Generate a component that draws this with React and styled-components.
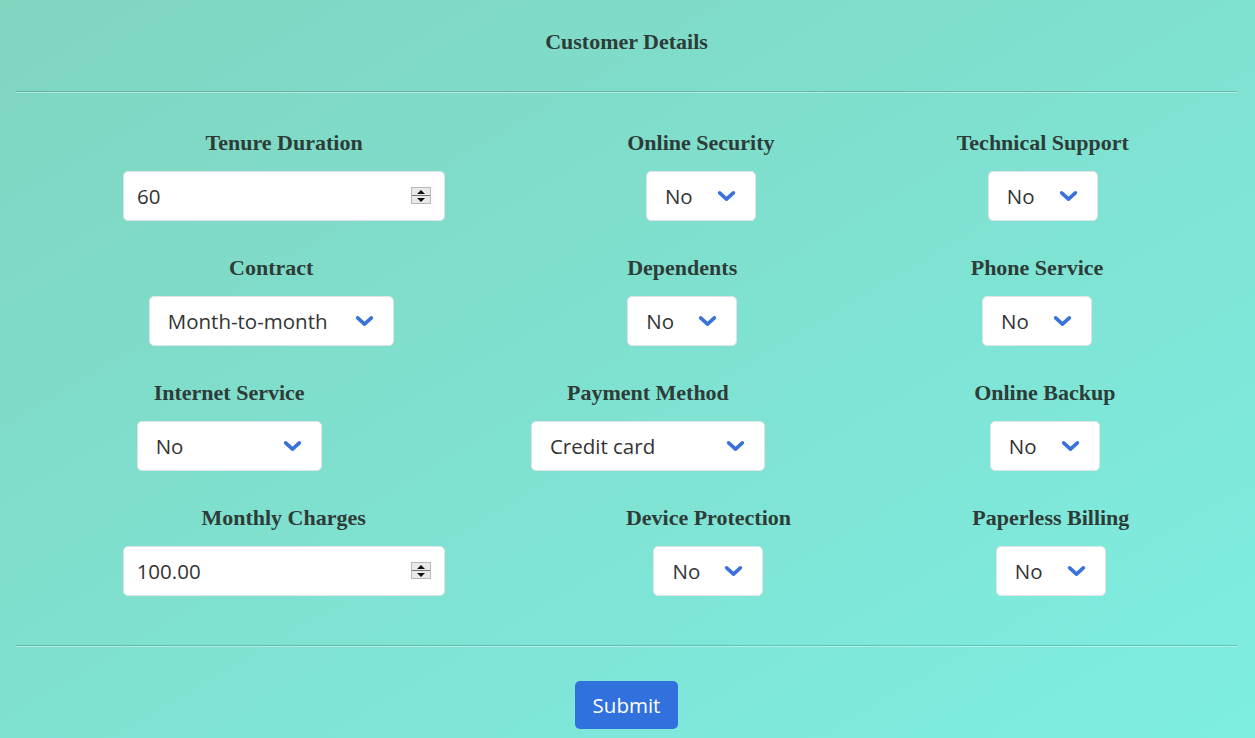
import { useState } from 'react';
import styled, { createGlobalStyle } from 'styled-components';

const GlobalStyle = createGlobalStyle`
  html, body {
    margin: 0;
    padding: 0;
  }
  * {
    box-sizing: border-box;
  }
`;

const chevron = `url("data:image/svg+xml,${encodeURIComponent(
  '<svg xmlns="http://www.w3.org/2000/svg" viewBox="0 0 18 11"><path d="M2.5 2.5l6.5 6 6.5-6" fill="none" stroke="#3a72dc" stroke-width="3.4" stroke-linecap="round" stroke-linejoin="round"/></svg>'
)}")`;

const Page = styled.div`
  min-height: 738px;
  padding: 0 18px 0 16px;
  background: linear-gradient(to bottom right, #80d5bf 0%, #7fe2d2 55%, #7eeee2 100%);
  font-family: 'Open Sans', 'Noto Sans', sans-serif;
`;

const Title = styled.h2`
  margin: 0;
  padding-top: 30px;
  height: 54px;
  font-family: 'Liberation Serif', 'Times New Roman', serif;
  font-size: 22px;
  line-height: 24px;
  font-weight: bold;
  text-align: center;
  color: #2e3c38;
`;

const Divider = styled.hr`
  margin: ${({ $top }) => $top}px 0 0;
  height: 0;
  border: 0;
  border-top: 1px solid rgba(40, 120, 105, 0.35);
  border-bottom: 1px solid rgba(255, 255, 255, 0.4);
`;

const Form = styled.form`
  display: flex;
  flex-direction: column;
  gap: 34px;
  padding: 37px 17px 0 16px;
`;

const Row = styled.div`
  display: flex;
`;

const Field = styled.div`
  flex: 1 1 auto;
  display: flex;
  flex-direction: column;
  align-items: center;
`;

const Label = styled.label`
  padding-top: 1px;
  margin-bottom: 16px;
  font-family: 'Liberation Serif', 'Times New Roman', serif;
  font-size: 22px;
  line-height: 24px;
  font-weight: bold;
  color: #2e3c38;
  white-space: nowrap;
`;

const Select = styled.select`
  appearance: none;
  width: ${({ $width }) => $width}px;
  height: 50px;
  padding: 0 44px 0 18px;
  border: 1px solid #dde3e6;
  border-radius: 5px;
  background: #fff ${chevron} no-repeat right 19px center / 19px 12px;
  font-family: 'Open Sans', 'Noto Sans', sans-serif;
  font-size: 20.5px;
  color: #333;
  outline: none;
`;

const NumberWrap = styled.div`
  position: relative;
  width: ${({ $width }) => $width}px;
`;

const NumberInput = styled.input`
  width: 100%;
  height: 50px;
  padding: 0 40px 0 13px;
  border: 1px solid #dde3e6;
  border-radius: 5px;
  background: #fff;
  font-family: 'Open Sans', 'Noto Sans', sans-serif;
  font-size: 20.5px;
  color: #333;
  outline: none;
  -moz-appearance: textfield;

  &::-webkit-inner-spin-button,
  &::-webkit-outer-spin-button {
    -webkit-appearance: none;
    margin: 0;
  }
`;

const Spinner = styled.div`
  position: absolute;
  right: 14px;
  top: 16px;
  width: 20px;
  height: 17px;
  display: flex;
  flex-direction: column;
  border: 1px solid #b9b9b9;
  background: #e9e9e9;
`;

const SpinHalf = styled.span`
  flex: 1;
  display: flex;
  align-items: center;
  justify-content: center;
  border-top: ${({ $down }) => ($down ? '1px solid #777' : '0')};

  &::before {
    content: '';
    border-left: 4px solid transparent;
    border-right: 4px solid transparent;
    ${({ $down }) => ($down ? 'border-top: 4px solid #111;' : 'border-bottom: 4px solid #111;')}
  }
`;

const Footer = styled.div`
  display: flex;
  justify-content: center;
  padding-top: 34px;
`;

const SubmitButton = styled.button`
  width: 103px;
  height: 48px;
  border: 0;
  border-radius: 5px;
  background: #3171de;
  color: #fff;
  font-family: 'Open Sans', 'Noto Sans', sans-serif;
  font-size: 20.5px;
  cursor: pointer;
`;

const yesNo = ['No', 'Yes'];

const rows = [
  [
    { name: 'Tenure Duration', type: 'number', value: '60', width: 322 },
    { name: 'Online Security', options: yesNo, width: 110 },
    { name: 'Technical Support', options: yesNo, width: 110 },
  ],
  [
    { name: 'Contract', options: ['Month-to-month', 'One year', 'Two year'], width: 245 },
    { name: 'Dependents', options: yesNo, width: 110 },
    { name: 'Phone Service', options: yesNo, width: 110 },
  ],
  [
    { name: 'Internet Service', options: ['No', 'DSL', 'Fiber optic'], width: 185 },
    {
      name: 'Payment Method',
      options: ['Credit card', 'Bank transfer', 'Electronic check', 'Mailed check'],
      width: 234,
    },
    { name: 'Online Backup', options: yesNo, width: 110 },
  ],
  [
    { name: 'Monthly Charges', type: 'number', value: '100.00', width: 322 },
    { name: 'Device Protection', options: yesNo, width: 110 },
    { name: 'Paperless Billing', options: yesNo, width: 110 },
  ],
];

const FormField = ({ field }) => {
  const [value, setValue] = useState(field.value ?? field.options[0]);

  return (
    <Field>
      <Label>{field.name}</Label>
      {field.type === 'number' ? (
        <NumberWrap $width={field.width}>
          <NumberInput type="number" value={value} onChange={(e) => setValue(e.target.value)} />
          <Spinner>
            <SpinHalf />
            <SpinHalf $down />
          </Spinner>
        </NumberWrap>
      ) : (
        <Select $width={field.width} value={value} onChange={(e) => setValue(e.target.value)}>
          {field.options.map((option) => (
            <option key={option}>{option}</option>
          ))}
        </Select>
      )}
    </Field>
  );
};

const App = () => (
  <Page>
    <GlobalStyle />
    <Title>Customer Details</Title>
    <Divider $top={37} />
    <Form onSubmit={(e) => e.preventDefault()}>
      {rows.map((row, i) => (
        <Row key={i}>
          {row.map((field) => (
            <FormField key={field.name} field={field} />
          ))}
        </Row>
      ))}
    </Form>
    <Divider $top={49} />
    <Footer>
      <SubmitButton type="submit">Submit</SubmitButton>
    </Footer>
  </Page>
);

export default App;
